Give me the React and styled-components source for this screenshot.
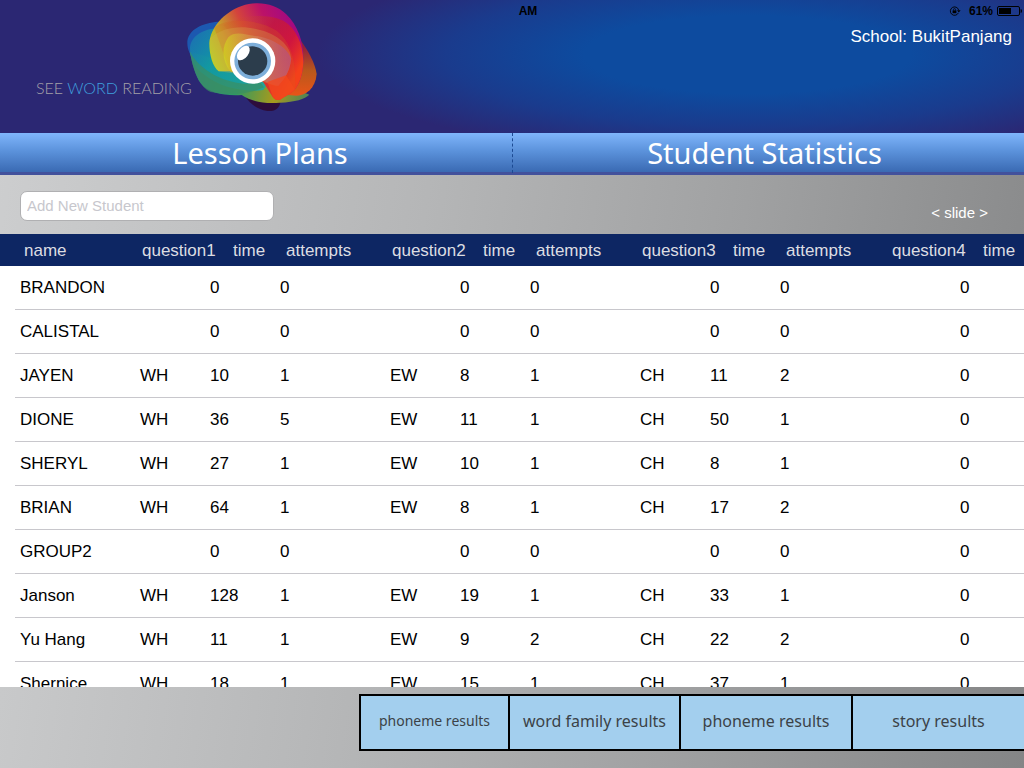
import React from "react";
import styled, { createGlobalStyle } from "styled-components";

const GlobalStyle = createGlobalStyle`
  *, *::before, *::after { box-sizing: border-box; }
  html, body { margin: 0; padding: 0; }
  body { font-family: "Liberation Sans", Arial, sans-serif; font-size: 17px; color: #000; }
`;

const Page = styled.div`
  display: flex;
  flex-direction: column;
  height: 100vh;
  overflow: hidden;
  background: linear-gradient(99deg, #cecfd0 0%, #b5b6b7 40%, #a0a1a2 68%, #848586 100%);
`;

const Header = styled.header`
  position: relative;
  display: flex;
  justify-content: space-between;
  flex: none;
  height: 133px;
  background: radial-gradient(ellipse 42% 77% at 73% 41%, #0d4b9f 0%, #0d4b9f 38%, #1a3b8d 70%, #2b2773 100%);
`;

const StatusBar = styled.div`
  position: absolute;
  top: 0;
  left: 0;
  right: 0;
  display: grid;
  grid-template-columns: 1fr auto 1fr;
  align-items: center;
  height: 22px;
  padding: 0 2px 0 34px;
  font-size: 12px;
  font-weight: bold;
`;

const StatusIcons = styled.div`
  display: flex;
  justify-content: flex-end;
  align-items: center;
  gap: 4px;
`;

const Percent = styled.span`
  margin-left: 4px;
`;

const Brand = styled.div`
  display: flex;
  align-items: flex-start;
  padding-left: 36px;
`;

const BrandName = styled.h1`
  margin: 76px 0 0;
  font-family: Lato, "Open Sans", sans-serif;
  font-size: 16px;
  font-weight: 300;
  line-height: 24px;
  white-space: nowrap;
  color: #a3a0a8;
`;

const BrandAccent = styled.span`
  color: #3f9fdc;
`;

const Logo = styled.svg`
  width: 145px;
  height: 115px;
  margin-left: -12px;
`;

const School = styled.p`
  margin: 27px 12px 0 0;
  line-height: 20px;
  color: #fff;
`;

const Nav = styled.nav`
  display: grid;
  grid-template-columns: 1fr 1fr;
  flex: none;
  height: 42px;
  border-bottom: 3px solid #42519c;
  background: linear-gradient(#7fb5fb, #5c93dc 45%, #3a6ab3);
`;

const NavLink = styled.a`
  padding: ${(p) => (p.$first ? "0 0 0 8px" : "0 8px 0 0")};
  border-left: ${(p) => (p.$first ? "none" : "1px dashed #1c4a93")};
  font-family: "Noto Sans", "Open Sans", sans-serif;
  font-size: 29px;
  line-height: 40px;
  text-align: center;
  text-decoration: none;
  color: #fff;
`;

const Toolbar = styled.section`
  display: flex;
  justify-content: space-between;
  align-items: flex-start;
  flex: none;
  height: 59px;
  padding: 16px 36px 0 20px;
`;

const NameInput = styled.input`
  width: 254px;
  height: 30px;
  padding: 0 6px 2px;
  border: 1px solid #b0b0b2;
  border-radius: 7px;
  background: #fff;
  font: 15px "Liberation Sans", Arial, sans-serif;
  &::placeholder { color: #c7c7cd; opacity: 1; }
`;

const SlideHint = styled.span`
  margin-top: 12px;
  font-size: 15px;
  line-height: 20px;
  color: #fff;
`;

const TableArea = styled.main`
  flex: 1;
  min-height: 0;
  overflow: hidden;
  background: #fff;
`;

const Results = styled.table`
  width: 100%;
  table-layout: fixed;
  border-collapse: collapse;
`;

const Col = styled.col`
  width: ${(p) => (p.$width ? p.$width + "px" : "auto")};
`;

const HeadRow = styled.tr`
  height: 32px;
  background: #0d2663;
`;

const HeadCell = styled.th`
  padding: 1px 0 0 ${(p) => p.$indent}px;
  font-weight: normal;
  text-align: left;
  white-space: nowrap;
  color: #dcdde2;
`;

const Row = styled.tr`
  height: 44px;
  background: linear-gradient(#c8c7cc, #c8c7cc) 15px 100% / 100% 1px no-repeat;
`;

const Cell = styled.td`
  padding: 0;
  white-space: nowrap;
`;

const NameCell = styled(Cell)`
  padding-left: 20px;
`;

const Footer = styled.footer`
  display: flex;
  justify-content: flex-end;
  flex: none;
  height: 81px;
  padding-top: 7px;
`;

const ResultTabs = styled.div`
  display: grid;
  grid-template-columns: 149px 171px 172px 173px;
  height: 57px;
`;

const ResultTab = styled.button`
  padding: 0 0 4px;
  border: 2px solid #000;
  border-right-width: 0;
  background: #a3cfee;
  font-family: "Noto Sans", "Open Sans", sans-serif;
  font-size: ${(p) => (p.$compact ? 14 : 16)}px;
  color: #3b4247;
`;

const questions = ["question1", "question2", "question3"];

const students = [
  ["BRANDON", ["", 0, 0], ["", 0, 0], ["", 0, 0]],
  ["CALISTAL", ["", 0, 0], ["", 0, 0], ["", 0, 0]],
  ["JAYEN", ["WH", 10, 1], ["EW", 8, 1], ["CH", 11, 2]],
  ["DIONE", ["WH", 36, 5], ["EW", 11, 1], ["CH", 50, 1]],
  ["SHERYL", ["WH", 27, 1], ["EW", 10, 1], ["CH", 8, 1]],
  ["BRIAN", ["WH", 64, 1], ["EW", 8, 1], ["CH", 17, 2]],
  ["GROUP2", ["", 0, 0], ["", 0, 0], ["", 0, 0]],
  ["Janson", ["WH", 128, 1], ["EW", 19, 1], ["CH", 33, 1]],
  ["Yu Hang", ["WH", 11, 1], ["EW", 9, 2], ["CH", 22, 2]],
  ["Shernice", ["WH", 18, 1], ["EW", 15, 1], ["CH", 37, 1]],
];

const resultTabs = ["phoneme results", "word family results", "phoneme results", "story results"];

function EyeLogo() {
  return (
    <Logo viewBox="0 0 435 345" aria-hidden="true">
      <defs>
        <linearGradient id="petal" x1="90" y1="190" x2="340" y2="70" gradientUnits="userSpaceOnUse">
          <stop offset="0" stopColor="#b2dc22" />
          <stop offset="0.25" stopColor="#c4a82a" />
          <stop offset="0.5" stopColor="#d4443c" />
          <stop offset="0.75" stopColor="#bc1268" />
          <stop offset="1" stopColor="#a40a80" />
        </linearGradient>
        <linearGradient id="flame" x1="170" y1="120" x2="350" y2="220" gradientUnits="userSpaceOnUse">
          <stop offset="0" stopColor="#c8501c" stopOpacity="0.1" />
          <stop offset="0.35" stopColor="#c81c2c" stopOpacity="0.6" />
          <stop offset="0.7" stopColor="#d81830" stopOpacity="0.8" />
          <stop offset="1" stopColor="#f4401a" />
        </linearGradient>
        <linearGradient id="ember" x1="370" y1="140" x2="370" y2="285" gradientUnits="userSpaceOnUse">
          <stop offset="0" stopColor="#93203c" />
          <stop offset="0.5" stopColor="#b8581c" />
          <stop offset="1" stopColor="#e85418" />
        </linearGradient>
        <linearGradient id="sea" x1="20" y1="90" x2="260" y2="280" gradientUnits="userSpaceOnUse">
          <stop offset="0" stopColor="#1e6cb4" />
          <stop offset="0.4" stopColor="#109aa4" />
          <stop offset="1" stopColor="#1fa4a0" />
        </linearGradient>
        <linearGradient id="moss" x1="30" y1="200" x2="400" y2="290" gradientUnits="userSpaceOnUse">
          <stop offset="0" stopColor="#2f7f86" />
          <stop offset="0.4" stopColor="#2f9a62" />
          <stop offset="0.7" stopColor="#a89a1c" />
          <stop offset="1" stopColor="#3f8060" />
        </linearGradient>
        <linearGradient id="iris" x1="130" y1="180" x2="335" y2="180" gradientUnits="userSpaceOnUse">
          <stop offset="0" stopColor="#d4e018" />
          <stop offset="0.5" stopColor="#d48860" />
          <stop offset="1" stopColor="#a84a98" />
        </linearGradient>
      </defs>
      <path d="M170 240C190 290 215 326 262 333C288 335 300 322 302 302L318 225Z" fill="#2d0d3c" />
      <path d="M22 130C22 92 60 72 105 66C180 60 270 90 320 140L290 250C240 290 150 260 100 225C55 205 22 165 22 130Z" fill="#1c58b0" />
      <path d="M30 155C36 190 45 225 62 250C84 280 135 288 185 285C215 305 255 312 300 308C345 306 375 297 388 284L330 260L150 190Z" fill="url(#moss)" />
      <path d="M30 148C30 105 75 84 125 84C205 82 290 105 330 150L250 270C190 278 120 262 75 226C48 208 30 180 30 148Z" fill="url(#sea)" opacity="0.92" />
      <path d="M30 155C50 195 100 232 160 246C190 254 220 252 240 246L252 262C200 286 140 284 92 276C60 262 38 210 30 155Z" fill="#3a8f62" opacity="0.7" />
      <path d="M358 116C384 150 406 190 410 222C406 266 378 286 350 287L290 282Z" fill="url(#ember)" />
      <path d="M116 214C98 200 88 165 88 130C92 82 130 38 185 18C232 2 285 10 318 42C354 76 372 128 370 185C368 230 356 252 345 268C330 285 312 290 304 297C294 302 284 300 279 292L250 246L150 214Z" fill="url(#petal)" />
      <path d="M130 76C170 50 250 36 310 62C350 86 368 130 370 185C368 230 356 252 345 268C330 285 312 290 304 297C294 302 284 300 279 292L250 246L200 150Z" fill="url(#flame)" />
      <path d="M102 82C150 50 240 60 290 92C332 125 350 180 345 268L304 297C294 302 284 300 279 292L250 246L150 214Z" fill="#d85820" opacity="0.28" />
      <path d="M90 115C130 78 190 75 240 90C290 102 332 135 334 176C328 222 310 243 292 258C275 256 245 245 230 230L116 214C98 200 86 150 90 115Z" fill="#d8b050" opacity="0.3" />
      <path d="M150 214C128 184 122 145 145 112C165 92 195 104 225 108C275 112 325 145 333 176C330 220 308 238 296 258C280 255 255 250 240 232Z" fill="url(#iris)" opacity="0.55" />
      <path d="M262 246L318 226L345 268C330 285 312 290 304 297C294 302 284 300 279 292Z" fill="#f4481c" opacity="0.75" />
      <circle cx="218" cy="183" r="68" fill="#fff" />
      <circle cx="218" cy="183" r="55" fill="#7daed9" />
      <circle cx="218" cy="183" r="44" fill="#2c3d4c" />
      <ellipse cx="190" cy="159" rx="25" ry="15" transform="rotate(-53 190 159)" fill="#fff" />
    </Logo>
  );
}

function RotationLock() {
  return (
    <svg width="12" height="12" viewBox="0 0 12 12" fill="none" stroke="#000" aria-hidden="true">
      <path d="M9.3 8A4.2 4.2 0 1 1 9.6 5" strokeWidth="0.9" />
      <path d="M8 5.2h3.6l-1.8 2.2z" fill="#000" stroke="none" />
      <rect x="3.6" y="5.4" width="3.8" height="2.8" fill="#000" stroke="none" />
      <path d="M4.5 5.5V4.6a1 1 0 0 1 2 0v0.9" strokeWidth="0.7" />
    </svg>
  );
}

function Battery() {
  return (
    <svg width="25" height="10" viewBox="0 0 25 10" aria-hidden="true">
      <rect x="0.5" y="0.5" width="22" height="9" rx="1.5" fill="none" stroke="#000" />
      <rect x="2" y="2" width="12" height="6" fill="#000" />
      <path d="M23.6 3a1.4 2 0 0 1 0 4z" fill="#000" />
    </svg>
  );
}

export default function App() {
  return (
    <Page>
      <GlobalStyle />
      <Header>
        <Brand>
          <BrandName>
            SEE <BrandAccent>WORD</BrandAccent> READING
          </BrandName>
          <EyeLogo />
        </Brand>
        <School>School: BukitPanjang</School>
        <StatusBar>
          <span />
          <span>AM</span>
          <StatusIcons>
            <RotationLock />
            <Percent>61%</Percent>
            <Battery />
          </StatusIcons>
        </StatusBar>
      </Header>
      <Nav>
        <NavLink href="#lessons" $first>Lesson Plans</NavLink>
        <NavLink href="#statistics">Student Statistics</NavLink>
      </Nav>
      <Toolbar>
        <NameInput type="text" placeholder="Add New Student" aria-label="Add New Student" />
        <SlideHint>&lt; slide &gt;</SlideHint>
      </Toolbar>
      <TableArea>
        <Results>
          <colgroup>
            <Col $width={140} />
            {questions.map((q) => (
              <React.Fragment key={q}>
                <Col $width={70} />
                <Col $width={70} />
                <Col $width={110} />
              </React.Fragment>
            ))}
            <Col $width={70} />
            <Col />
          </colgroup>
          <thead>
            <HeadRow>
              <HeadCell $indent={24}>name</HeadCell>
              {questions.map((q) => (
                <React.Fragment key={q}>
                  <HeadCell $indent={2}>{q}</HeadCell>
                  <HeadCell $indent={23}>time</HeadCell>
                  <HeadCell $indent={6}>attempts</HeadCell>
                </React.Fragment>
              ))}
              <HeadCell $indent={2}>question4</HeadCell>
              <HeadCell $indent={23}>time</HeadCell>
            </HeadRow>
          </thead>
          <tbody>
            {students.map(([name, ...answers]) => (
              <Row key={name}>
                <NameCell>{name}</NameCell>
                {answers.map(([sound, time, attempts], i) => (
                  <React.Fragment key={i}>
                    <Cell>{sound}</Cell>
                    <Cell>{time}</Cell>
                    <Cell>{attempts}</Cell>
                  </React.Fragment>
                ))}
                <Cell />
                <Cell>0</Cell>
              </Row>
            ))}
          </tbody>
        </Results>
      </TableArea>
      <Footer>
        <ResultTabs>
          {resultTabs.map((label, i) => (
            <ResultTab key={i} type="button" $compact={i === 0}>{label}</ResultTab>
          ))}
        </ResultTabs>
      </Footer>
    </Page>
  );
}
